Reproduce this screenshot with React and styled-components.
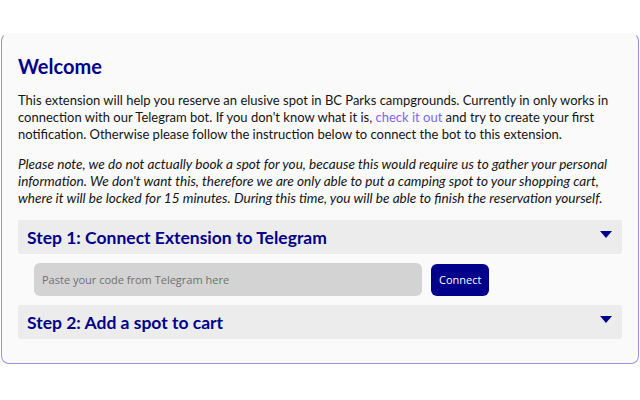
import React, {useState} from 'react';
import styled, {createGlobalStyle} from 'styled-components';

const GlobalStyle = createGlobalStyle`
    body {
        margin: 0;
        background: #ffffff;
        font-family: Lato, "Liberation Sans", sans-serif;
    }
`;

const steps = [
    {id: 1, title: 'Step 1: Connect Extension to Telegram'},
    {id: 2, title: 'Step 2: Add a spot to cart'},
];

const App = () => {

    //STATE
    const [open, setOpen] = useState(1);
    const [code, setCode] = useState('');

    return(
        <Page>
            <GlobalStyle />
            <Card>
                <Title>Welcome</Title>
                <Text>
                    This extension will help you reserve an elusive spot in BC Parks campgrounds. Currently in only works in<br />
                    connection with our Telegram bot. If you don't know what it is, <Link href="#bot">check it out</Link> and try to create your first<br />
                    notification. Otherwise please follow the instruction below to connect the bot to this extension.
                </Text>
                <Text italic>
                    Please note, we do not actually book a spot for you, because this would require us to gather your personal<br />
                    information. We don't want this, therefore we are only able to put a camping spot to your shopping cart,<br />
                    where it will be locked for 15 minutes. During this time, you will be able to finish the reservation yourself.
                </Text>
                {
                    steps.map(step => (
                        <Step key={step.id}>
                            <StepHeader onClick={() => setOpen(open === step.id ? 0 : step.id)}>
                                <span>{step.title}</span>
                                <Arrow viewBox="0 0 12 8">
                                    <path d="M0 0 H12 L6 7 Z" />
                                </Arrow>
                            </StepHeader>
                            {
                                step.id === 1 && open === 1 ?
                                    (<ConnectRow>
                                        <CodeInput
                                            placeholder="Paste your code from Telegram here"
                                            value={code}
                                            onChange={e => setCode(e.target.value)}
                                        />
                                        <ConnectButton>Connect</ConnectButton>
                                    </ConnectRow>) : null
                            }
                        </Step>
                    ))
                }
            </Card>
        </Page>
    );
};

const Page = styled.div`
    padding: 33px 1px 0;
`;

const Card = styled.div`
    background: #fafafa;
    border: 1px solid #9b8fe8;
    border-top-color: transparent;
    border-radius: 8px;
    padding: 20px 16px 24px;
    color: #141414;
`;

const Title = styled.h1`
    margin: 0 0 14px;
    font-size: 20px;
    line-height: 24px;
    font-weight: 700;
    color: #00008b;
`;

const Text = styled.p`
    margin: 0 0 13px;
    font-size: ${props => props.italic ? '13.6px' : '13px'};
    line-height: 17px;
    white-space: nowrap;
    font-style: ${props => props.italic ? 'italic' : 'normal'};
`;

const Link = styled.a`
    color: #7b68ee;
    text-decoration: none;
`;

const Step = styled.div`
    margin-bottom: 9px;

    &:last-child {
        margin-bottom: 0;
    }
`;

const StepHeader = styled.div`
    height: 34px;
    padding: 0 10px 0 9px;
    display: flex;
    align-items: center;
    justify-content: space-between;
    background: #ececec;
    border-radius: 2px;
    color: #00008b;
    font-size: 17.5px;
    font-weight: 700;
    cursor: pointer;
`;

const Arrow = styled.svg`
    width: 12px;
    height: 8px;
    margin-top: -4px;
    fill: #00008b;
`;

const ConnectRow = styled.div`
    display: flex;
    align-items: center;
    gap: 9px;
    padding: 9px 16px 0;
`;

const CodeInput = styled.input`
    width: 388px;
    height: 33px;
    box-sizing: border-box;
    border: none;
    border-radius: 6px;
    background: #d3d3d3;
    padding: 0 8px;
    font-family: "Open Sans", sans-serif;
    font-size: 11px;
    outline: none;

    &::placeholder {
        color: #707070;
    }
`;

const ConnectButton = styled.button`
    height: 32px;
    padding: 0 8px;
    border: none;
    border-radius: 6px;
    background: #00008b;
    color: #ffffff;
    font-family: "Open Sans", sans-serif;
    font-size: 11px;
    cursor: pointer;
`;

export default App;
